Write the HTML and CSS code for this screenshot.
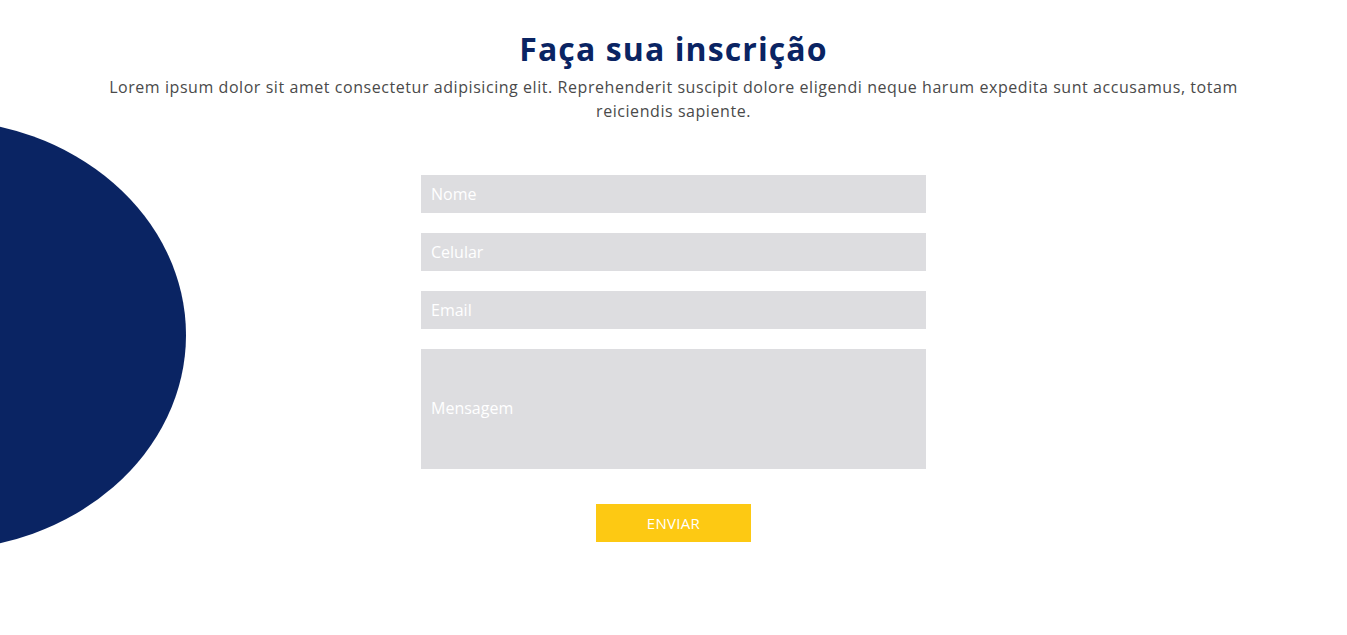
FILE: index.html
```html
<!DOCTYPE html>
<html lang="pt-BR">
<head>
<meta charset="utf-8">
<title>Faça sua inscrição</title>
<link rel="stylesheet" href="styles.css">
</head>
<body>
<section class="signup">
  <div class="blob"></div>
  <div class="signup-inner">
    <h1 class="signup-title">Faça sua inscrição</h1>
    <p class="signup-text">Lorem ipsum dolor sit amet consectetur adipisicing elit. Reprehenderit suscipit dolore eligendi neque harum expedita sunt accusamus, totam reiciendis sapiente.</p>
    <form class="signup-form">
      <input class="field" type="text" placeholder="Nome">
      <input class="field" type="text" placeholder="Celular">
      <input class="field" type="email" placeholder="Email">
      <textarea class="field field-area" placeholder="Mensagem"></textarea>
      <button class="btn-send" type="button">ENVIAR</button>
    </form>
  </div>
</section>
</body>
</html>
```

FILE: styles.css
```css
* { box-sizing: border-box; }

body {
  margin: 0;
  background: #ffffff;
  font-family: "Open Sans", "Noto Sans", sans-serif;
}

.signup {
  position: relative;
  height: 635px;
  overflow: hidden;
}

.blob {
  position: absolute;
  left: -310px;
  top: 120px;
  width: 496px;
  height: 430px;
  border-radius: 50%;
  background: #0a2463;
}

.signup-inner {
  position: relative;
  max-width: 1150px;
  margin: 0 auto;
  padding-top: 27px;
  text-align: center;
}

.signup-title {
  margin: 0 0 4px;
  font-size: 32px;
  line-height: 44px;
  font-weight: 700;
  letter-spacing: 1.1px;
  color: #0a2463;
}

.signup-text {
  margin: 0;
  font-size: 16px;
  line-height: 24px;
  color: #4a4a4a;
  letter-spacing: 0.56px;
}

.signup-form {
  width: 505px;
  margin: 52px auto 0;
  display: flex;
  flex-direction: column;
  align-items: center;
  gap: 20px;
}

.field {
  width: 100%;
  height: 38px;
  border: none;
  outline: none;
  background: #dddde0;
  padding: 0 10px;
  font-family: inherit;
  font-size: 16px;
  color: #ffffff;
}

.field::placeholder { color: #ffffff; }

.field-area {
  height: 120px;
  resize: none;
  padding: 48px 10px 0;
}

.btn-send {
  margin-top: 15px;
  width: 155px;
  height: 38px;
  border: none;
  background: #fdc913;
  color: #ffffff;
  font-family: inherit;
  font-size: 15px;
  letter-spacing: 0.3px;
  cursor: pointer;
}
```
